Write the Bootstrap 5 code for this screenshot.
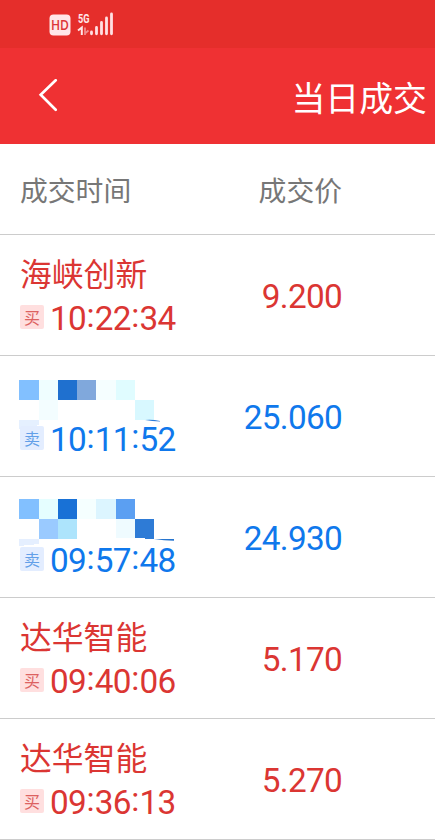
<!DOCTYPE html>
<html lang="zh-CN">
<head>
<meta charset="utf-8">
<meta name="viewport" content="width=device-width, initial-scale=1">
<title>当日成交</title>
<link href="https://cdn.jsdelivr.net/npm/bootstrap@5.3.0/dist/css/bootstrap.min.css" rel="stylesheet">
<style>
  body { font-family: "Noto Sans CJK SC", sans-serif; color: #777; height: 840px; }
  .status-strip { height: 48px; background: #e52e2b; padding-left: 49px; }
  .title-bar { height: 96px; background: #ef3133; padding: 0 8px 0 37px; }
  .page-title { font-size: 33.9px; line-height: 48px; font-weight: 400; padding-top: 2px; }
  .trade-head { height: 91px; font-size: 27.8px; line-height: 40px; padding-bottom: 1px; }
  .trade-head, .trade-row { border: 0; border-bottom: 1px solid #ccc; border-radius: 0; padding-left: 20px; padding-right: 93px; background: #fff; }
  .trade-row { height: 121px; }
  .stock-name { font-size: 31.8px; line-height: 40px; height: 41px; margin-top: 17px; }
  .mosaic { height: 58px; margin-left: -1px; }
  .trade-time, .trade-price { font-family: Roboto, sans-serif; font-size: 33.3px; line-height: 46px; letter-spacing: -.7px; }
  .trade-time { height: 46px; padding-top: 5px; }
  .trade-price { padding-top: 3px; }
  .colon { vertical-align: 3px; line-height: 1; letter-spacing: 0; margin: 0 .2px 0 .5px; }
  .side-chip { font-family: "Noto Sans CJK SC", sans-serif; letter-spacing: 0; width: 24px; height: 24px; border-radius: 2px; font-size: 16px; line-height: 24px; margin-right: 6px; margin-top: -3px; }
  .is-buy { color: #db3633; }
  .is-sell { color: #0f78ec; }
  .is-buy .side-chip { background: #ffdfdf; color: #dc6261; }
  .is-sell .side-chip { background: #e3edff; color: #629fe8; }
</style>
</head>
<body class="bg-white overflow-hidden">
<header class="text-white">
  <div class="status-strip d-flex">
    <svg width="68" height="48" viewBox="49 0 68 48" role="img" aria-label="HD 5G">
      <rect x="49.5" y="14.5" width="21" height="21" rx="4" fill="#ffe6e8"/>
      <text x="60" y="30" text-anchor="middle" font-family="Open Sans, sans-serif" font-size="14" font-weight="600" fill="#dc3438" textLength="18" lengthAdjust="spacingAndGlyphs">HD</text>
      <text x="78" y="22.8" font-family="Roboto, sans-serif" font-size="13" font-weight="700" fill="#ffe6e8" textLength="11.5" lengthAdjust="spacingAndGlyphs">5G</text>
      <path d="M78 30.5L81.8 27.5V35" fill="none" stroke="#ffe6e8" stroke-width="2"/>
      <path d="M85 27.5V35M85.5 33L88.5 30.5" fill="none" stroke="#f28f90" stroke-width="1.7"/>
      <path d="M91.5 32V33.8M96.5 27.5V33.8M101.5 22.5V33.8M106.5 18V33.8M111.5 14V33.8" stroke="#ffdfe2" stroke-width="2.8" stroke-linecap="round"/>
    </svg>
  </div>
  <div class="title-bar d-flex align-items-center justify-content-between">
    <svg width="22" height="34" viewBox="0 0 22 34" fill="none" stroke="#fff" stroke-width="2.7" stroke-linecap="round" stroke-linejoin="miter" aria-hidden="true"><path d="M18.7 1.3L3.7 15.7L18.7 30.7"/></svg>
    <h1 class="page-title mb-0">当日成交</h1>
  </div>
</header>
<main>
  <div class="trade-head d-flex align-items-center justify-content-between">
    <span>成交时间</span><span>成交价</span>
  </div>
  <ul class="list-group list-group-flush">
    <li class="trade-row is-buy d-flex align-items-center justify-content-between">
      <div class="align-self-start">
        <div class="stock-name">海峡创新</div>
        <div class="trade-time d-flex align-items-center"><span class="side-chip text-center">买</span><span>10<span class="colon">:</span>22<span class="colon">:</span>34</span></div>
      </div>
      <div class="trade-price">9.200</div>
    </li>
    <li class="trade-row is-sell d-flex align-items-center justify-content-between">
      <div class="align-self-start">
        <svg class="mosaic d-block overflow-visible" width="150" height="58" viewBox="19 356 150 58" shape-rendering="crispEdges" aria-hidden="true">
          <path fill="#82c0ff" d="M19 380h20v20H19z"/><path fill="#effeff" d="M39 380h19v20H39z"/><path fill="#1f70cf" d="M58 380h19v20H58z"/><path fill="#80a8dc" d="M77 380h19v20H77z"/><path fill="#f5feff" d="M96 380h20v20H96z"/><path fill="#e0fcff" d="M116 380h19v20h-19z"/>
          <path fill="#f3fdff" d="M39 400h19v20H39z"/><path fill="#d8f8ff" d="M135 400h19v20h-19z"/><path fill="#e5f0ff" d="M19 420h20v5l-5 1v3H19z"/>
          <path fill="#2b7cd9" shape-rendering="auto" d="M145 420q8-.6 15 1v.5q-8-.2-15-1.5z"/>
        </svg>
        <div class="trade-time d-flex align-items-center"><span class="side-chip text-center">卖</span><span>10<span class="colon">:</span>11<span class="colon">:</span>52</span></div>
      </div>
      <div class="trade-price">25.060</div>
    </li>
    <li class="trade-row is-sell d-flex align-items-center justify-content-between">
      <div class="align-self-start">
        <svg class="mosaic d-block overflow-visible" width="150" height="58" viewBox="19 477 150 58" shape-rendering="crispEdges" aria-hidden="true">
          <path fill="#82c0ff" d="M19 499h20v20H19z"/><path fill="#e5feff" d="M39 499h19v20H39z"/><path fill="#1871d6" d="M58 499h19v20H58z"/><path fill="#f5ffff" d="M77 499h19v20H77z"/><path fill="#dcf5ff" d="M96 499h20v20H96z"/><path fill="#5b9ff2" d="M116 499h19v20h-19z"/>
          <path fill="#9acaff" d="M39 519h19v20H39z"/><path fill="#ade4fc" d="M58 519h19v20H58z"/><path fill="#effbff" d="M116 519h19v19h-19z"/><path fill="#2e7bd6" d="M135 519h19v20l-19-1z"/><path fill="#e5efff" d="M19 539h20v5l-20 2z"/>
          <path fill="#2775ce" shape-rendering="auto" d="M154 539h20v1.8q-10-.3-20-1.8z"/>
        </svg>
        <div class="trade-time d-flex align-items-center"><span class="side-chip text-center">卖</span><span>09<span class="colon">:</span>57<span class="colon">:</span>48</span></div>
      </div>
      <div class="trade-price">24.930</div>
    </li>
    <li class="trade-row is-buy d-flex align-items-center justify-content-between">
      <div class="align-self-start">
        <div class="stock-name">达华智能</div>
        <div class="trade-time d-flex align-items-center"><span class="side-chip text-center">买</span><span>09<span class="colon">:</span>40<span class="colon">:</span>06</span></div>
      </div>
      <div class="trade-price">5.170</div>
    </li>
    <li class="trade-row is-buy d-flex align-items-center justify-content-between">
      <div class="align-self-start">
        <div class="stock-name">达华智能</div>
        <div class="trade-time d-flex align-items-center"><span class="side-chip text-center">买</span><span>09<span class="colon">:</span>36<span class="colon">:</span>13</span></div>
      </div>
      <div class="trade-price">5.270</div>
    </li>
  </ul>
</main>
<script src="https://cdn.jsdelivr.net/npm/bootstrap@5.3.0/dist/js/bootstrap.bundle.min.js"></script>
</body>
</html>
